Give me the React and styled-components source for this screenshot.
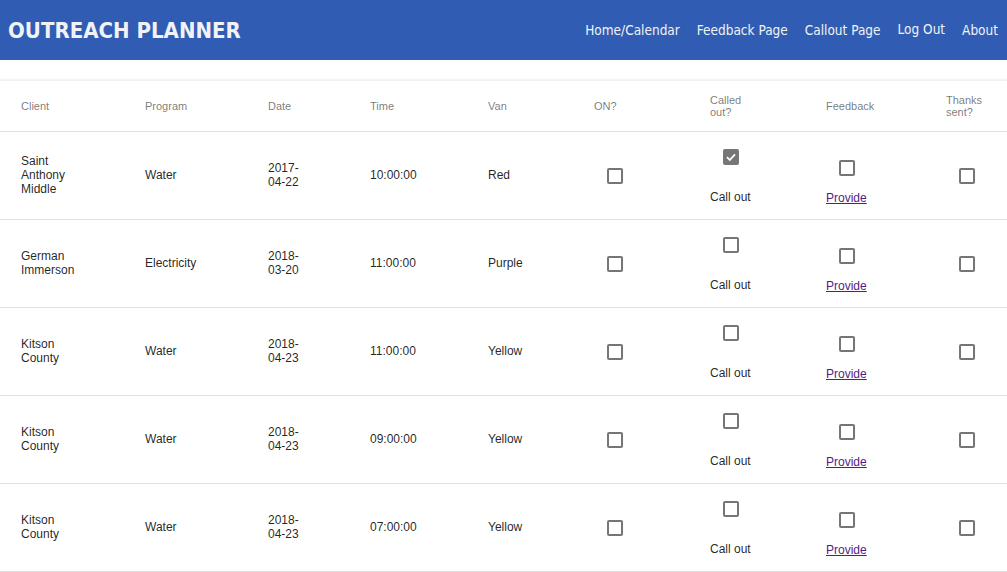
import React from "react";
import styled, { createGlobalStyle } from "styled-components";

const GlobalStyle = createGlobalStyle`
  body {
    margin: 0;
    background: #fff;
    font-family: "Liberation Sans", Arial, sans-serif;
  }
`;

const rows = [
  { client: "Saint Anthony Middle", program: "Water", date: "2017-04-22", time: "10:00:00", van: "Red", calledOut: true },
  { client: "German Immerson", program: "Electricity", date: "2018-03-20", time: "11:00:00", van: "Purple" },
  { client: "Kitson County", program: "Water", date: "2018-04-23", time: "11:00:00", van: "Yellow" },
  { client: "Kitson County", program: "Water", date: "2018-04-23", time: "09:00:00", van: "Yellow" },
  { client: "Kitson County", program: "Water", date: "2018-04-23", time: "07:00:00", van: "Yellow" },
];

const App = () => {
  return (
    <>
      <GlobalStyle />
      <TopBar>
        <Title>OUTREACH PLANNER</Title>
        <NavList>
          <NavLink href="#">Home/Calendar</NavLink>
          <NavLink href="#">Feedback Page</NavLink>
          <NavLink href="#">Callout Page</NavLink>
          <NavLink href="#" raised>Log Out</NavLink>
          <NavLink href="#">About</NavLink>
        </NavList>
      </TopBar>
      <Paper>
        <HeadRow>
          <HeadCell>Client</HeadCell>
          <HeadCell>Program</HeadCell>
          <HeadCell>Date</HeadCell>
          <HeadCell>Time</HeadCell>
          <HeadCell>Van</HeadCell>
          <HeadCell>ON?</HeadCell>
          <HeadCell narrow>Called out?</HeadCell>
          <HeadCell>Feedback</HeadCell>
          <HeadCell narrow>Thanks sent?</HeadCell>
        </HeadRow>
        {rows.map((r, i) => (
          <BodyRow key={i}>
            <Cell wrap="70px">{r.client}</Cell>
            <Cell>{r.program}</Cell>
            <Cell wrap="40px">{r.date}</Cell>
            <Cell>{r.time}</Cell>
            <Cell>{r.van}</Cell>
            <BoxCell>
              <Box />
            </BoxCell>
            <StackCell top="17px" gap="25px">
              <Box checked={r.calledOut} />
              <CellText>Call out</CellText>
            </StackCell>
            <StackCell top="28px" gap="15px">
              <Box />
              <ProvideLink href="#">Provide</ProvideLink>
            </StackCell>
            <BoxCell>
              <Box />
            </BoxCell>
          </BodyRow>
        ))}
      </Paper>
    </>
  );
};

const Box = ({ checked }) => (
  <CheckBox checked={checked}>
    {checked && (
      <svg width="12" height="12" viewBox="0 0 12 12">
        <path d="M2 6.2 L4.8 9 L10 3.4" fill="none" stroke="#fff" strokeWidth="1.8" />
      </svg>
    )}
  </CheckBox>
);

const TopBar = styled.header`
  height: 60px;
  background: #305db3;
  display: flex;
  align-items: center;
  justify-content: space-between;
  padding: 0 9px 0 8px;
`;

const Title = styled.h1`
  margin: 0;
  font-family: "DejaVu Sans Condensed", "DejaVu Sans", sans-serif;
  font-weight: bold;
  font-size: 22px;
  color: #f1f2f6;
`;

const NavList = styled.nav`
  display: flex;
  gap: 17px;
  align-items: center;
`;

const NavLink = styled.a`
  font-family: "DejaVu Sans Condensed", "DejaVu Sans", sans-serif;
  font-size: 13.5px;
  color: #f1f2f6;
  text-decoration: none;
  position: relative;
  top: ${(p) => (p.raised ? "-1px" : "0")};
`;

const Paper = styled.section`
  margin-top: 20px;
  background: #fff;
  box-shadow: 0 -1px 2px rgba(0, 0, 0, 0.06);
  border-top: 1px solid #f1f1f1;
`;

const Row = styled.div`
  display: grid;
  grid-template-columns: 124px 123px 102px 118px 106px 116px 116px 120px 1fr;
  padding-left: 21px;
  border-bottom: 1px solid #e0e0e0;
`;

const HeadRow = styled(Row)`
  height: 50px;
`;

const BodyRow = styled(Row)`
  height: 87px;
`;

const HeadCell = styled.div`
  font-size: 11px;
  line-height: 12px;
  color: rgba(0, 0, 0, 0.54);
  align-self: center;
  max-width: ${(p) => (p.narrow ? "40px" : "none")};
`;

const Cell = styled.div`
  font-size: 12px;
  line-height: 14px;
  color: rgba(0, 0, 0, 0.87);
  align-self: center;
  margin-bottom: 2px;
  max-width: ${(p) => p.wrap || "none"};
`;

const BoxCell = styled.div`
  align-self: center;
`;

const StackCell = styled.div`
  display: flex;
  flex-direction: column;
  align-items: flex-start;
  padding-top: ${(p) => p.top};
  gap: ${(p) => p.gap};
`;

const CellText = styled.span`
  font-size: 12px;
  line-height: 15px;
  color: rgba(0, 0, 0, 0.87);
`;

const ProvideLink = styled.a`
  font-size: 12px;
  line-height: 15px;
  color: #551a8b;
  text-decoration: underline;
`;

const CheckBox = styled.span`
  display: flex;
  align-items: center;
  justify-content: center;
  box-sizing: border-box;
  width: 16px;
  height: 16px;
  margin-left: 13px;
  border-radius: 2px;
  border: 2px solid #767676;
  background: ${(p) => (p.checked ? "#767676" : "transparent")};
`;

export default App;
